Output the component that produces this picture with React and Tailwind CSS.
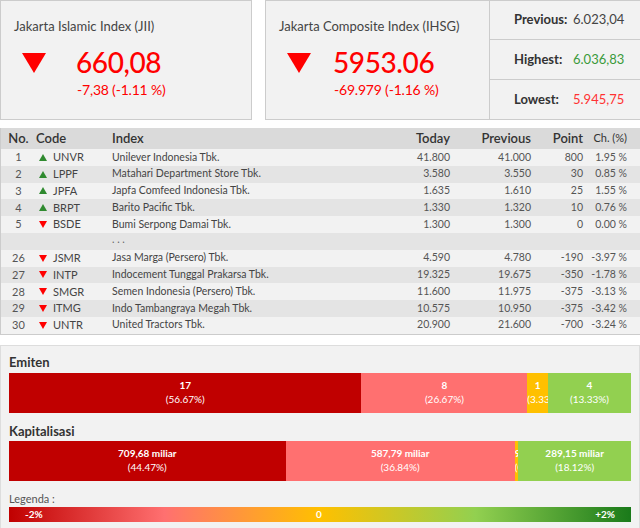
import React from "react";

const FONT = { fontFamily: "Lato, 'Noto Sans', sans-serif" };

const rows = [
  { no: 1, code: "UNVR", up: true, name: "Unilever Indonesia Tbk.", today: "41.800", prev: "41.000", pt: "800", ch: "1.95 %" },
  { no: 2, code: "LPPF", up: true, name: "Matahari Department Store Tbk.", today: "3.580", prev: "3.550", pt: "30", ch: "0.85 %" },
  { no: 3, code: "JPFA", up: true, name: "Japfa Comfeed Indonesia Tbk.", today: "1.635", prev: "1.610", pt: "25", ch: "1.55 %" },
  { no: 4, code: "BRPT", up: true, name: "Barito Pacific Tbk.", today: "1.330", prev: "1.320", pt: "10", ch: "0.76 %" },
  { no: 5, code: "BSDE", up: false, name: "Bumi Serpong Damai Tbk.", today: "1.300", prev: "1.300", pt: "0", ch: "0.00 %" },
  null,
  { no: 26, code: "JSMR", up: false, name: "Jasa Marga (Persero) Tbk.", today: "4.590", prev: "4.780", pt: "-190", ch: "-3.97 %" },
  { no: 27, code: "INTP", up: false, name: "Indocement Tunggal Prakarsa Tbk.", today: "19.325", prev: "19.675", pt: "-350", ch: "-1.78 %" },
  { no: 28, code: "SMGR", up: false, name: "Semen Indonesia (Persero) Tbk.", today: "11.600", prev: "11.975", pt: "-375", ch: "-3.13 %" },
  { no: 29, code: "ITMG", up: false, name: "Indo Tambangraya Megah Tbk.", today: "10.575", prev: "10.950", pt: "-375", ch: "-3.42 %" },
  { no: 30, code: "UNTR", up: false, name: "United Tractors Tbk.", today: "20.900", prev: "21.600", pt: "-700", ch: "-3.24 %" },
];

function BigDown() {
  return (
    <div className="w-0 h-0 border-l-[12px] border-r-[12px] border-t-[20px] border-l-transparent border-r-transparent border-t-[#f00]" />
  );
}

function SmallArrow({ up }) {
  return up ? (
    <div className="w-0 h-0 border-l-[4px] border-r-[4px] border-b-[7px] border-l-transparent border-r-transparent border-b-[#2f8a2f]" />
  ) : (
    <div className="w-0 h-0 border-l-[4px] border-r-[4px] border-t-[7px] border-l-transparent border-r-transparent border-t-[#f00]" />
  );
}

function IndexValue({ title, value, change, arrowPad }) {
  return (
    <div className="flex flex-col pt-[17px] pl-[13px]">
      <div className="text-[13px] leading-[16px] text-[#444]">{title}</div>
      <div className="flex mt-[10px]">
        <div className={`${arrowPad} pt-[9px]`}>
          <BigDown />
        </div>
        <div className="flex flex-col">
          <div className="text-[28px] leading-[36px] tracking-[-0.4px] text-[#f00] -ml-[1px] font-medium">{value}</div>
          <div className="text-[14px] leading-[18px] text-[#f00] mt-[1px] tracking-[-0.2px]">{change}</div>
        </div>
      </div>
    </div>
  );
}

function StatRow({ label, value, color, last }) {
  return (
    <div className={`h-[40px] flex items-center pl-[24px] text-[13px] ${last ? "" : "border-b border-[#ccc]"}`}>
      <span className="font-bold text-[#333] w-[59px]">{label}</span>
      <span className={color}>{value}</span>
    </div>
  );
}

function Bar({ segs }) {
  return (
    <div className="flex h-[40px] w-full">
      {segs.map((s, i) => (
        <div
          key={i}
          className={`${s.cls} h-full overflow-hidden pt-[5px] text-center text-white text-[10px] leading-[14px] whitespace-nowrap`}
          style={{ width: `${s.w}%` }}
        >
          <div className="font-bold">{s.a}</div>
          <div>{s.b}</div>
        </div>
      ))}
    </div>
  );
}

export default function App() {
  return (
    <div style={FONT} className="w-[640px] h-[528px] overflow-hidden bg-white text-[#444]">
      {/* index cards */}
      <div className="flex h-[120px]">
        <div className="w-[252px] h-full border border-[#ccc] bg-[#f2f2f2]">
          <IndexValue title="Jakarta Islamic Index (JII)" value="660,08" change="-7,38 (-1.11 %)" arrowPad="pl-[8px] pr-[31px]" />
        </div>
        <div className="ml-[13px] flex-1 h-full border border-[#ccc] border-r-0 bg-[#f2f2f2] flex">
          <div className="w-[224px] h-full border-r border-[#ccc]">
            <IndexValue title="Jakarta Composite Index (IHSG)" value="5953.06" change="-69.979 (-1.16 %)" arrowPad="pl-[8px] pr-[23px]" />
          </div>
          <div className="flex-1 flex flex-col">
            <StatRow label="Previous:" value="6.023,04" color="text-[#444]" />
            <StatRow label="Highest:" value="6.036,83" color="text-[#3a9a3a]" />
            <StatRow label="Lowest:" value="5.945,75" color="text-[#f33]" last />
          </div>
        </div>
      </div>

      {/* top movers table */}
      <div className="mt-[8px] border border-[#ccc] border-t-0 border-r-0">
        <div className="flex items-center h-[21px] bg-[#dadada] text-[13px] font-semibold text-[#333]">
          <div className="w-[35px] text-center">No.</div>
          <div className="w-[76px]">Code</div>
          <div className="flex-1">Index</div>
          <div className="w-[80px] text-right">Today</div>
          <div className="w-[81px] text-right">Previous</div>
          <div className="w-[52px] text-right">Point</div>
          <div className="w-[44px] text-right text-[11px] font-normal">Ch. (%)</div>
          <div className="w-[13px]" />
        </div>
        {rows.map((r, i) => (
          <div
            key={i}
            className={`flex items-center h-[16.8px] text-[10.5px] ${i % 2 === 0 ? "bg-[#f2f2f2]" : "bg-[#e4e4e4]"}`}
          >
            {r ? (
              <>
                <div className="w-[35px] text-center text-[11px] text-[#555]">{r.no}</div>
                <div className="w-[76px] flex items-center">
                  <div className="ml-[3px] w-[14px]">
                    <SmallArrow up={r.up} />
                  </div>
                  <span className="text-[11px] text-[#444]">{r.code}</span>
                </div>
                <div className="flex-1 text-[#444]">{r.name}</div>
                <div className="w-[80px] text-right text-[#555]">{r.today}</div>
                <div className="w-[81px] text-right text-[#555]">{r.prev}</div>
                <div className="w-[52px] text-right text-[#555]">{r.pt}</div>
                <div className="w-[44px] text-right text-[#555]">{r.ch}</div>
                <div className="w-[13px]" />
              </>
            ) : (
              <div className="pl-[111px] text-[#666] leading-[10px] -mt-[4px]">. . .</div>
            )}
          </div>
        ))}
      </div>

      {/* distribution panel */}
      <div className="mt-[10px] border border-[#ddd] bg-[#f2f2f2] pl-[8px] pr-[8px] pt-[8px] pb-[10px]">
        <div className="text-[13px] font-bold text-[#333] leading-[17px]">Emiten</div>
        <div className="mt-[2px]">
          <Bar
            segs={[
              { w: 56.67, cls: "bg-[#c00000]", a: "17", b: "(56.67%)" },
              { w: 26.67, cls: "bg-[#ff7070]", a: "8", b: "(26.67%)" },
              { w: 3.33, cls: "bg-[#ffc000]", a: "1", b: "(3.33%)" },
              { w: 13.33, cls: "bg-[#92d050]", a: "4", b: "(13.33%)" },
            ]}
          />
        </div>
        <div className="mt-[10px] text-[13px] font-bold text-[#333] leading-[17px]">Kapitalisasi</div>
        <div className="mt-[1px]">
          <Bar
            segs={[
              { w: 44.47, cls: "bg-[#c00000]", a: "709,68 miliar", b: "(44.47%)" },
              { w: 36.84, cls: "bg-[#ff7070]", a: "587,79 miliar", b: "(36.84%)" },
              { w: 0.57, cls: "bg-[#ffc000]", a: "9,13 miliar", b: "(0.57%)" },
              { w: 18.12, cls: "bg-[#92d050]", a: "289,15 miliar", b: "(18.12%)" },
            ]}
          />
        </div>
        <div className="mt-[11px] text-[11px] text-[#555] leading-[14px]">Legenda :</div>
        <div className="mt-[1px] h-[15px] flex items-center justify-between px-[16px] text-[10px] font-bold text-white bg-[linear-gradient(to_right,#c00000_0%,#ff7070_25%,#ffc000_50%,#92d050_75%,#1a7a1a_100%)]">
          <span>-2%</span>
          <span>0</span>
          <span>+2%</span>
        </div>
      </div>
    </div>
  );
}
